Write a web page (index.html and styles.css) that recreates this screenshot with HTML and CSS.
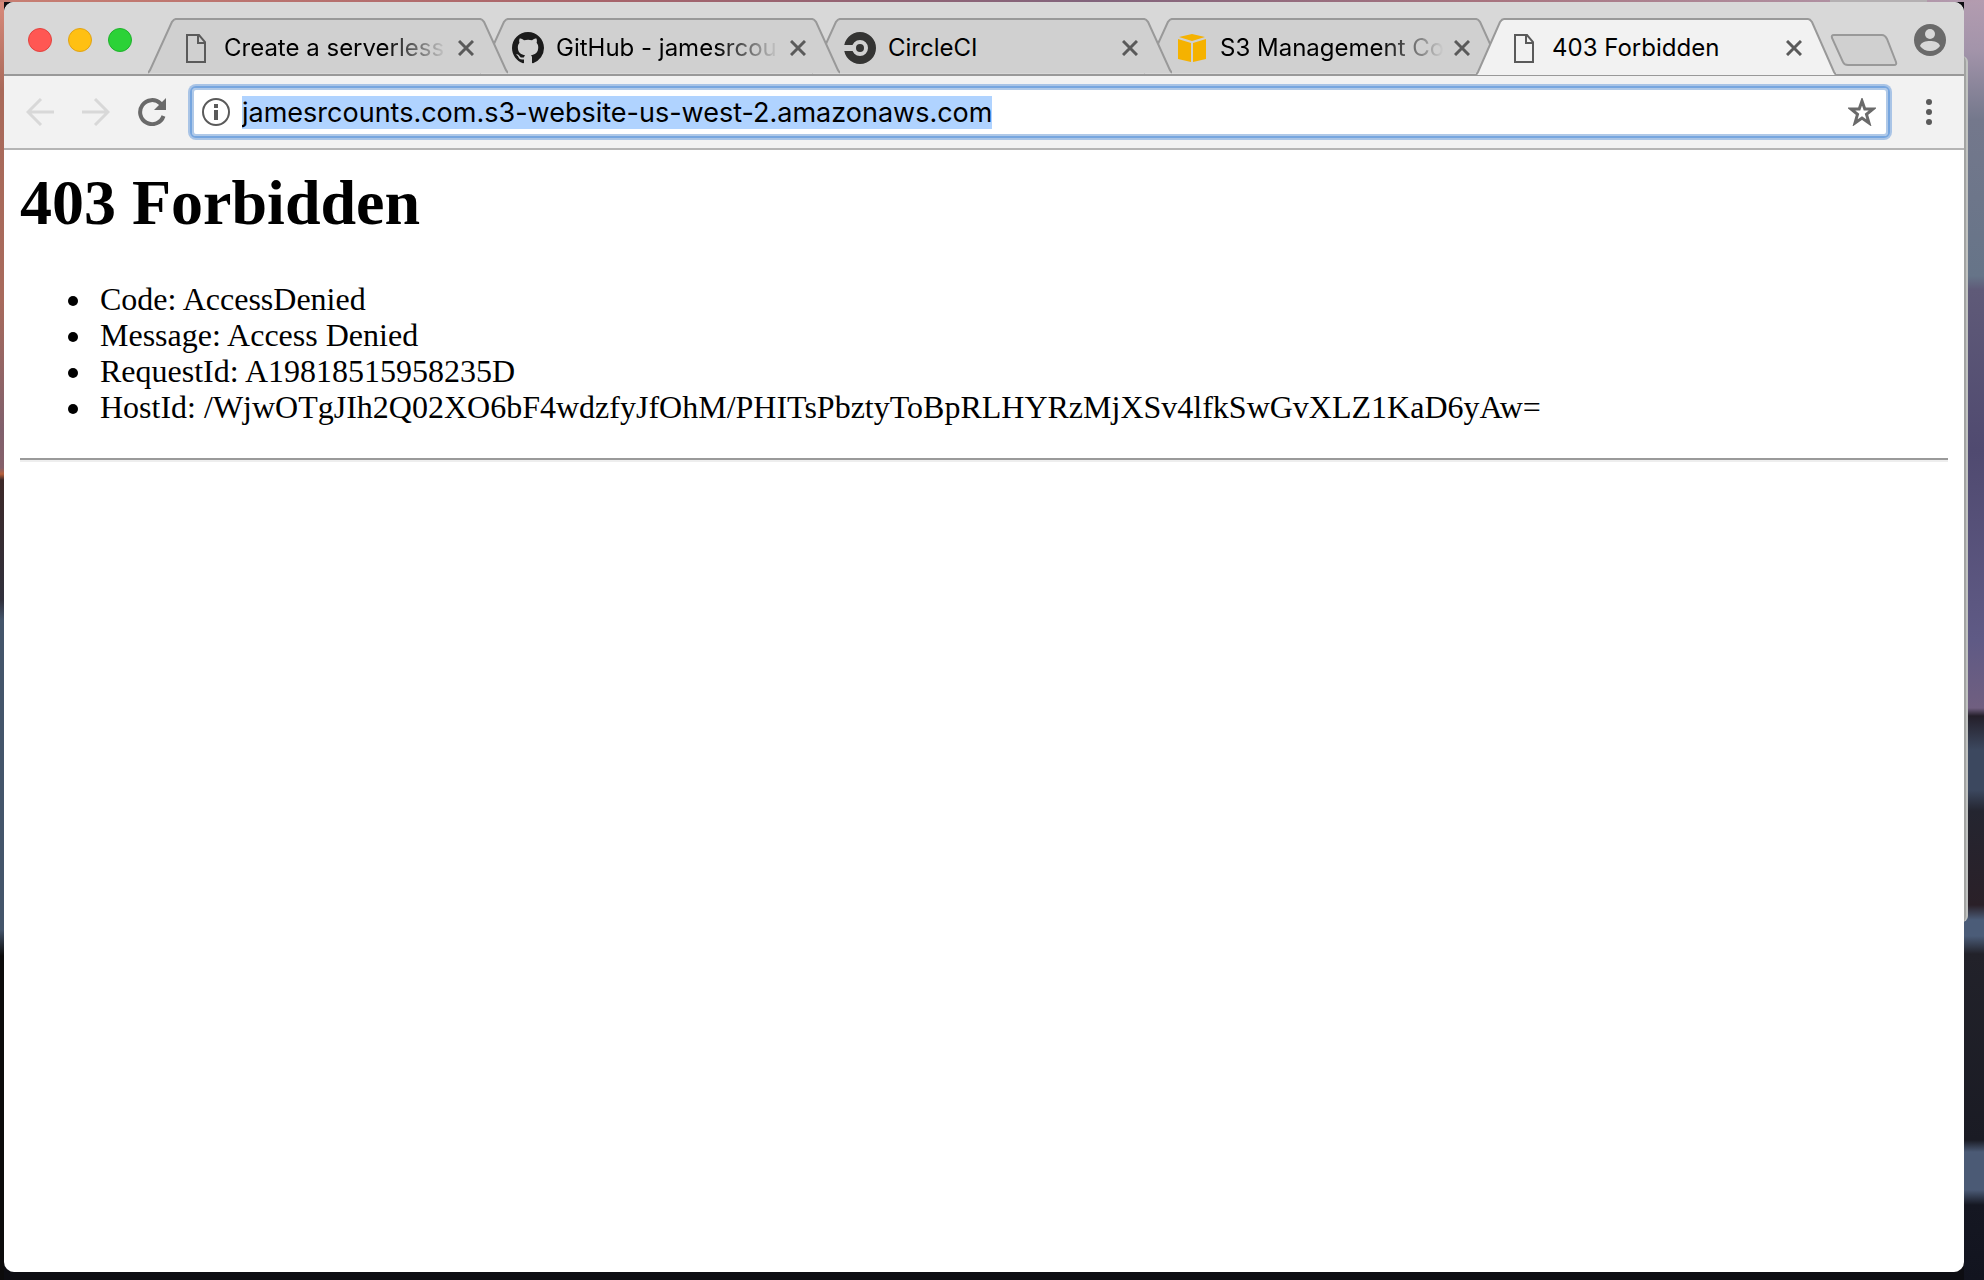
FILE: index.html
```html
<!DOCTYPE html>
<html lang="en">
<head>
    <meta charset="UTF-8">
    <meta name="viewport" content="width=device-width, initial-scale=1.0">
    <title>403 Forbidden</title>
    <link rel="stylesheet" href="styles.css">
</head>
<body>
    <div class="back-window back-window-top"></div>
    <div class="back-window back-window-side"></div>

    <div class="window">
        <header class="tab-strip">
            <div class="lights">
                <button class="light close-light" aria-label="Close window"></button>
                <button class="light min-light" aria-label="Minimize window"></button>
                <button class="light max-light" aria-label="Zoom window"></button>
            </div>

            <nav class="tabs">
                <div class="tab tab-1">
                    <svg class="tab-shape" viewBox="0 0 360 58" preserveAspectRatio="none"><path d="M0 57 L2 54 L24 4 Q26 1 28 1 H332 Q334 1 336 4 L358 54 L360 57"/></svg>
                    <svg class="favicon" viewBox="0 0 32 32"><path d="M7 3h12l6 7v20H7zM18 3v8h7" fill="none" stroke="#5a5a5a" stroke-width="2"/></svg>
                    <a class="tab-title faded" href="#">Create a serverless</a>
                    <button class="tab-close" aria-label="Close tab"><svg viewBox="0 0 16 16"><path d="M1 1l14 14M15 1L1 15"/></svg></button>
                </div>
                <div class="tab tab-2">
                    <svg class="tab-shape" viewBox="0 0 360 58" preserveAspectRatio="none"><path d="M0 57 L2 54 L24 4 Q26 1 28 1 H332 Q334 1 336 4 L358 54 L360 57"/></svg>
                    <svg class="favicon" viewBox="0 0 16 16"><path fill="#1b1b1b" d="M8 0C3.58 0 0 3.58 0 8c0 3.54 2.29 6.53 5.47 7.59.4.07.55-.17.55-.38 0-.19-.01-.82-.01-1.49-2.01.37-2.53-.49-2.69-.94-.09-.23-.48-.94-.82-1.13-.28-.15-.68-.52-.01-.53.63-.01 1.08.58 1.23.82.72 1.21 1.87.87 2.33.66.07-.52.28-.87.51-1.07-1.78-.2-3.64-.89-3.64-3.95 0-.87.31-1.59.82-2.15-.08-.2-.36-1.02.08-2.12 0 0 .67-.21 2.2.82.64-.18 1.32-.27 2-.27s1.36.09 2 .27c1.53-1.04 2.2-.82 2.2-.82.44 1.1.16 1.92.08 2.12.51.56.82 1.27.82 2.15 0 3.07-1.87 3.75-3.65 3.95.29.25.54.73.54 1.48 0 1.07-.01 1.93-.01 2.2 0 .21.15.46.55.38A8.01 8.01 0 0 0 16 8c0-4.42-3.58-8-8-8z"/></svg>
                    <a class="tab-title faded" href="#">GitHub - jamesrcou</a>
                    <button class="tab-close" aria-label="Close tab"><svg viewBox="0 0 16 16"><path d="M1 1l14 14M15 1L1 15"/></svg></button>
                </div>
                <div class="tab tab-3">
                    <svg class="tab-shape" viewBox="0 0 360 58" preserveAspectRatio="none"><path d="M0 57 L2 54 L24 4 Q26 1 28 1 H332 Q334 1 336 4 L358 54 L360 57"/></svg>
                    <svg class="favicon" viewBox="0 0 32 32"><circle cx="16" cy="16" r="12" fill="none" stroke="#343433" stroke-width="8"/><path d="M0 13h9v6H0z" fill="#d0d0d0"/><circle cx="16" cy="16" r="4" fill="#343433"/></svg>
                    <a class="tab-title" href="#">CircleCI</a>
                    <button class="tab-close" aria-label="Close tab"><svg viewBox="0 0 16 16"><path d="M1 1l14 14M15 1L1 15"/></svg></button>
                </div>
                <div class="tab tab-4">
                    <svg class="tab-shape" viewBox="0 0 360 58" preserveAspectRatio="none"><path d="M0 57 L2 54 L24 4 Q26 1 28 1 H332 Q334 1 336 4 L358 54 L360 57"/></svg>
                    <svg class="favicon" viewBox="0 0 32 32"><g fill="#f5b200"><path d="M3 5l13-3 13 3-13 4z"/><path d="M2 7l13 4v19L2 27z"/><path d="M30 7l-13 4v19l13-3z"/></g></svg>
                    <a class="tab-title faded" href="#">S3 Management Co</a>
                    <button class="tab-close" aria-label="Close tab"><svg viewBox="0 0 16 16"><path d="M1 1l14 14M15 1L1 15"/></svg></button>
                </div>
                <div class="tab active">
                    <svg class="tab-shape" viewBox="0 0 360 58" preserveAspectRatio="none"><path d="M0 57 L2 54 L24 4 Q26 1 28 1 H332 Q334 1 336 4 L358 54 L360 57"/></svg>
                    <svg class="favicon" viewBox="0 0 32 32"><path d="M7 3h12l6 7v20H7zM18 3v8h7" fill="none" stroke="#5a5a5a" stroke-width="2"/></svg>
                    <a class="tab-title" href="#">403 Forbidden</a>
                    <button class="tab-close" aria-label="Close tab"><svg viewBox="0 0 16 16"><path d="M1 1l14 14M15 1L1 15"/></svg></button>
                </div>
            </nav>

            <button class="new-tab" aria-label="New tab"><svg viewBox="0 0 68 32"><path d="M4 1h48q3 0 5 4l9 23q1 3-2 3H18q-4 0-5-3L2 4q-1-3 2-3z" fill="#d0d0d0" stroke="#999" stroke-width="2"/></svg></button>
            <button class="profile" aria-label="Profile"><svg viewBox="0 0 32 32"><circle cx="16" cy="16" r="16" fill="#6a6a6a"/><circle cx="16" cy="10" r="5" fill="#d8d8d8"/><path d="M6 22c1-4 6-5 10-5s9 1 10 5c-2 3-6 5-10 5s-8-2-10-5z" fill="#d8d8d8"/></svg></button>
        </header>

        <div class="toolbar">
            <button class="nav-button disabled" aria-label="Back"><svg viewBox="0 0 28 28"><path d="M28 14H2M15 1L2 14l13 13"/></svg></button>
            <button class="nav-button disabled" aria-label="Forward"><svg viewBox="0 0 28 28"><path d="M0 14h26M13 1l13 13-13 13"/></svg></button>
            <button class="nav-button" aria-label="Reload"><svg viewBox="0 0 28 28"><path d="M25.500 18A12 12 0 1 1 22.500 5.500L25 8"/><path d="M28 0v12H16z" class="solid"/></svg></button>
            <div class="omnibox">
                <svg class="info" viewBox="0 0 28 28"><circle cx="14" cy="14" r="13" fill="none" stroke="#5a5a5a" stroke-width="2"/><path d="M12 6h4v4h-4zM12 12h4v10h-4z" fill="#5a5a5a"/></svg>
                <input class="address" type="text" aria-label="Address" value="jamesrcounts.com.s3-website-us-west-2.amazonaws.com" spellcheck="false" onfocus="this.select()" autofocus>
                <button class="star" aria-label="Bookmark"><svg viewBox="0 0 28 28"><path d="M14 3l2.800 8h8.200l-6.500 5.300 2.500 8.700-7-5-7 5 2.500-8.700L3 11h8.200z"/></svg></button>
            </div>
            <button class="menu" aria-label="Menu"><svg viewBox="0 0 6 26"><circle cx="3" cy="3" r="3"/><circle cx="3" cy="13" r="3"/><circle cx="3" cy="23" r="3"/></svg></button>
        </div>

        <main class="page">
            <h1>403 Forbidden</h1>
            <ul>
                <li>Code: AccessDenied</li>
                <li>Message: Access Denied</li>
                <li>RequestId: A19818515958235D</li>
                <li>HostId: /WjwOTgJIh2Q02XO6bF4wdzfyJfOhM/PHITsPbztyToBpRLHYRzMjXSv4lfkSwGvXLZ1KaD6yAw=</li>
            </ul>
            <hr>
        </main>
    </div>
</body>
</html>
```

FILE: styles.css
```css
* {
    box-sizing: border-box;
}

/* desktop: top, left and right edges of the wallpaper */
body {
    margin: 0;
    padding: 2px 20px 8px 4px;
    height: 100vh;
    display: flex;
    overflow: hidden;
    position: relative;
    font-family: Inter, sans-serif;
    background-color: #0d0d12;
    background-image:
        linear-gradient(to right, #c87f73, #a8646a 30%, #82647c 55%, #a8747f 75%, #b39cb0),
        linear-gradient(to bottom, #d98a7b, #a96a5a 90px, #a86a5c 300px, #80606c 430px, #85606a 468px, #b8603c 474px, #3c2828 480px, #30303c 600px, #44556b 620px, #44556b 930px, #0c0b0b 956px),
        linear-gradient(to bottom, #b39cb0, #a394aa 50px, #74788c 120px, #667488 276px, #5f5a78 290px, #504a70 450px, #5f5a85 640px, #705f80 708px, #241f2a 716px, #3c485f 750px, #3c485f 790px, #242530 811px, #2a2028 905px, #4b5c78 920px, #4b5c78 936px, #22222a 954px, #1a1b24 1140px, #4b5a75 1152px, #4b5a75 1190px, #151722 1205px, #12141f);
    background-size: 100% 2px, 4px 100%, 20px 100%;
    background-position: left top, left top, right top;
    background-repeat: no-repeat;
}

/* windows that stick out behind the browser */
.back-window {
    position: absolute;
}

.back-window-top {
    top: 0;
    right: 57px;
    width: 97px;
    height: 2px;
    background-color: #b4b0b2;
}

.back-window-side {
    top: 56px;
    right: 16px;
    width: 12px;
    height: 866px;
    border-right: 2px solid #c0c2c0;
    border-radius: 0 6px 6px 0;
    background-color: #a2a3a2;
}

.window {
    flex: 1;
    min-width: 0;
    display: flex;
    flex-direction: column;
    position: relative;
    background-color: white;
    border-radius: 10px;
    overflow: hidden;
}

button {
    padding: 0;
    border: none;
    background: none;
    flex-shrink: 0;
}

svg {
    display: block;
}

/* tab strip */
.tab-strip {
    height: 74px;
    display: flex;
    align-items: flex-start;
    padding: 16px 18px 0 24px;
    background-color: #d8d8d8;
    border-bottom: 2px solid #999;
}

.lights {
    display: flex;
    gap: 16px;
    margin-top: 10px;
    margin-right: 16px;
}

.light {
    width: 24px;
    height: 24px;
    border-radius: 50%;
    border: 1px solid;
}

.close-light {
    background-color: #ff5753;
    border-color: #e2433f;
}

.min-light {
    background-color: #ffc012;
    border-color: #e0a316;
}

.max-light {
    background-color: #2bd237;
    border-color: #1fb12c;
}

.tabs {
    flex: 0 1 1688px;
    min-width: 0;
    display: flex;
}

.tab {
    flex: 1 1 0;
    min-width: 0;
    height: 58px;
    margin-right: -28px;
    padding: 2px 34px 0 32px;
    display: flex;
    align-items: center;
    position: relative;
}

.tab:last-child {
    margin-right: 0;
}

.tab-1 {
    z-index: 4;
}

.tab-2 {
    z-index: 3;
}

.tab-3 {
    z-index: 2;
}

.tab-4 {
    z-index: 1;
}

.active {
    z-index: 5;
}

.tab-shape {
    position: absolute;
    left: 0;
    top: 0;
    width: 100%;
    height: 56px;
}

.tab-shape path {
    fill: #d0d0d0;
    stroke: #999;
    stroke-width: 2;
    vector-effect: non-scaling-stroke;
}

.active .tab-shape {
    height: 58px;
}

.active .tab-shape path {
    fill: #f2f2f2;
}

.favicon {
    position: relative;
    width: 32px;
    height: 32px;
    margin-right: 12px;
    flex-shrink: 0;
}

.tab-title {
    flex: 1;
    min-width: 0;
    position: relative;
    font-size: 24px;
    line-height: 32px;
    color: black;
    text-decoration: none;
    white-space: nowrap;
}

.faded {
    -webkit-mask-image: linear-gradient(to right, black calc(100% - 64px), transparent);
    mask-image: linear-gradient(to right, black calc(100% - 64px), transparent);
}

.tab-close {
    position: relative;
    margin-left: 10px;
}

.tab-close svg {
    width: 16px;
    height: 16px;
    fill: none;
    stroke: #5a5a5a;
    stroke-width: 3;
}

.new-tab {
    margin-top: 16px;
    margin-left: -6px;
}

.new-tab svg {
    width: 68px;
    height: 32px;
}

.profile {
    margin-top: 6px;
    margin-left: auto;
}

.profile svg {
    width: 32px;
    height: 32px;
}

/* toolbar */
.toolbar {
    height: 74px;
    display: flex;
    align-items: center;
    padding: 0 32px 0 22px;
    background-color: #f2f2f2;
    border-bottom: 2px solid #b5b5b5;
}

.nav-button {
    margin-right: 28px;
}

.nav-button svg {
    width: 28px;
    height: 28px;
    fill: none;
    stroke: #6a6a6a;
    stroke-width: 4;
}

.nav-button .solid {
    fill: #6a6a6a;
    stroke: none;
}

.disabled svg {
    stroke: #d8d8d8;
    stroke-width: 3;
}

.omnibox {
    flex: 1;
    height: 52px;
    min-width: 0;
    display: flex;
    align-items: center;
    margin-left: -4px;
    padding: 0 12px 0 10px;
    background-color: white;
    border: 2px solid #77a6df;
    border-radius: 6px;
    box-shadow: 0 0 0 2px #a9c4e6, inset 0 0 0 2px #b0c9e8;
}

.info {
    width: 28px;
    height: 28px;
    flex-shrink: 0;
}

.address {
    flex: 1;
    min-width: 0;
    padding: 0;
    margin: 0 12px;
    border: none;
    outline: none;
    background: none;
    color: black;
    font-family: Inter, sans-serif;
    font-size: 27px;
}

.address::selection {
    background-color: #b0d3ff;
    color: black;
}

.star svg {
    width: 28px;
    height: 28px;
    fill: none;
    stroke: #6a6a6a;
    stroke-width: 3;
}

.menu {
    margin-left: 36px;
}

.menu svg {
    width: 6px;
    height: 26px;
    fill: #5a5a5a;
}

/* error page */
.page {
    flex: 1;
    padding: 16px;
    font-family: "Liberation Serif", "Times New Roman", serif;
    font-size: 32px;
    line-height: 36px;
    color: black;
}

h1 {
    margin: 0 0 41px;
    font-size: 64px;
    line-height: 74px;
}

ul {
    margin: 0 0 33px;
    padding-left: 74px;
}

li {
    padding-left: 6px;
}

hr {
    margin: 0;
    border: none;
    border-top: 2px solid #9a9a9a;
    border-bottom: 2px solid #eee;
}
```
